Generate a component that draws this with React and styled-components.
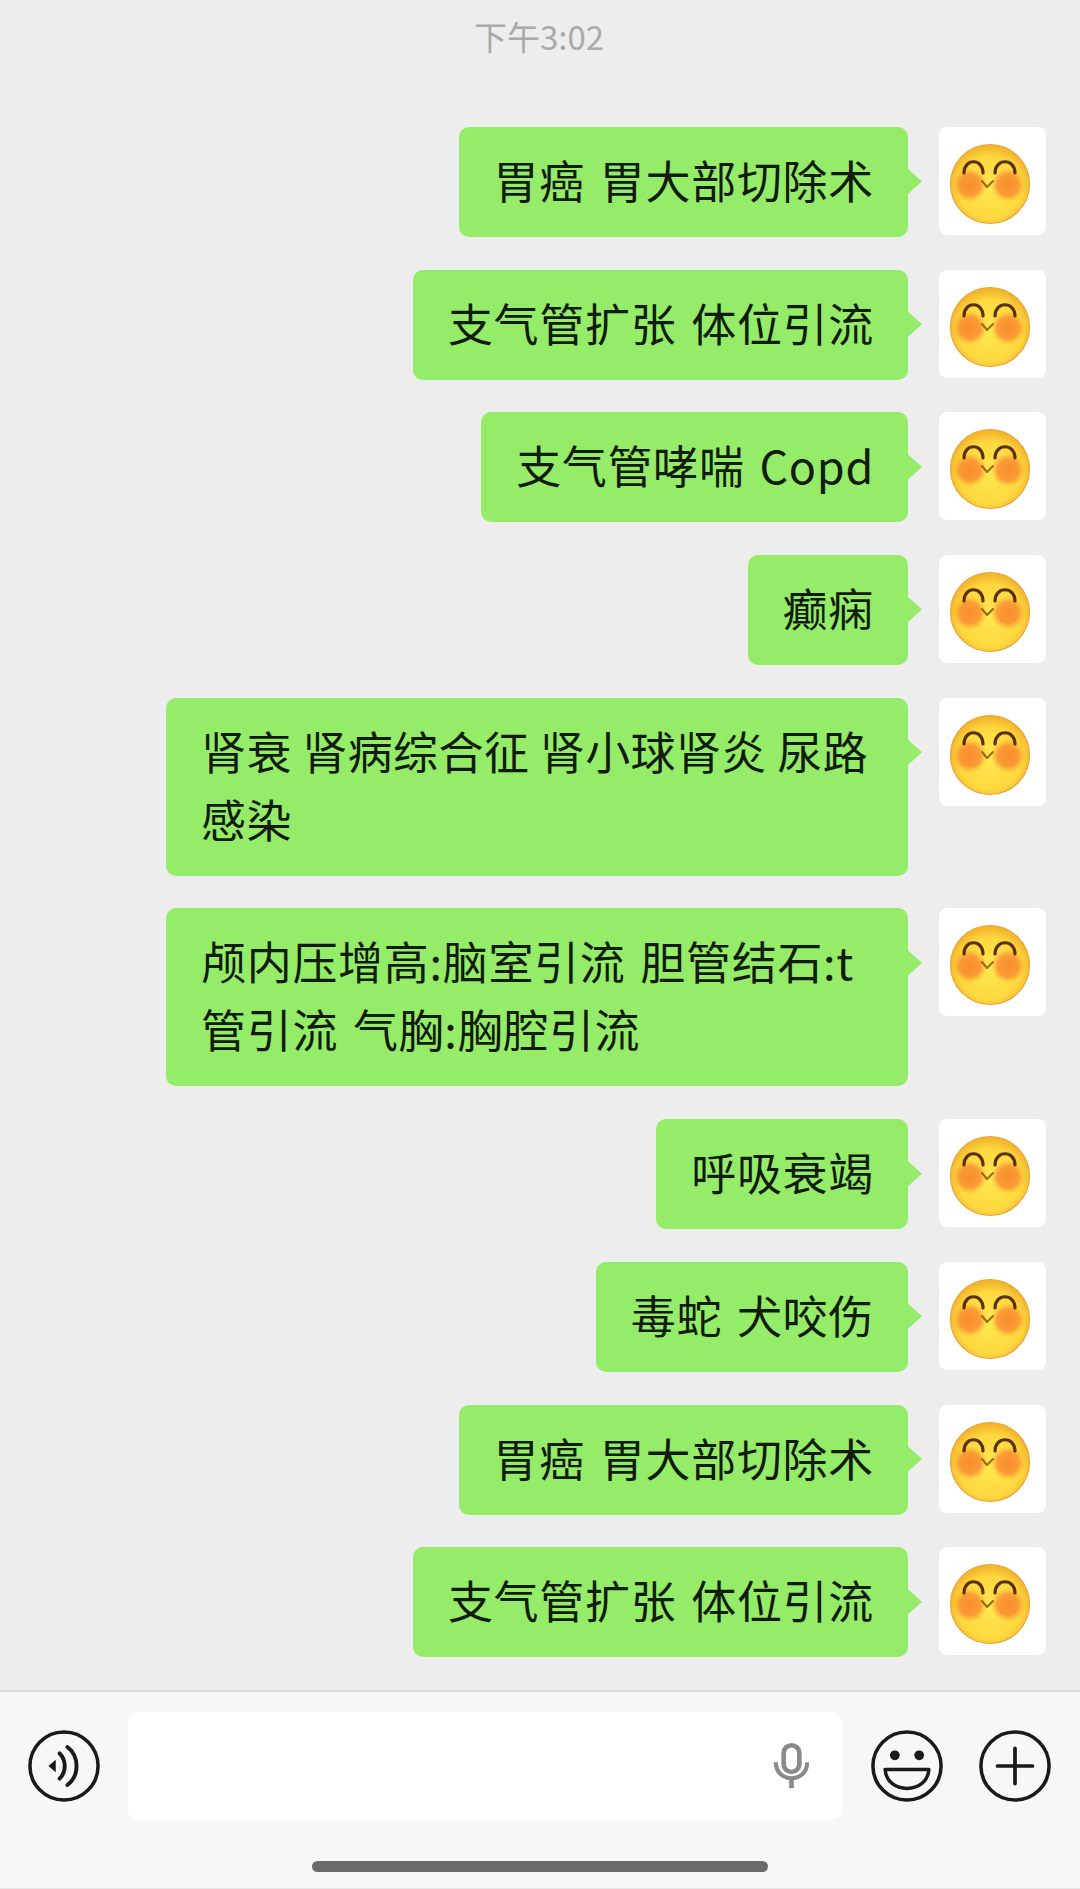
import React from "react";
import styled, { createGlobalStyle } from "styled-components";

const messages = [
  { text: "胃癌 胃大部切除术" },
  { text: "支气管扩张 体位引流" },
  { text: "支气管哮喘 Copd" },
  { text: "癫痫" },
  { text: "肾衰 肾病综合征 肾小球肾炎 尿路感染", tight: true },
  { text: "颅内压增高:脑室引流 胆管结石:t管引流 气胸:胸腔引流" },
  { text: "呼吸衰竭" },
  { text: "毒蛇 犬咬伤" },
  { text: "胃癌 胃大部切除术" },
  { text: "支气管扩张 体位引流" },
];

function BlushFace() {
  return (
    <svg width="88" height="88" viewBox="0 0 88 88">
      <defs>
        <radialGradient id="faceFill" cx="50%" cy="55%" r="58%">
          <stop offset="0%" stopColor="#ffe84f" />
          <stop offset="68%" stopColor="#fdd83e" />
          <stop offset="100%" stopColor="#efa726" />
        </radialGradient>
        <radialGradient id="cheekFill">
          <stop offset="0%" stopColor="#f98a2e" stopOpacity="0.95" />
          <stop offset="62%" stopColor="#fa8f32" stopOpacity="0.85" />
          <stop offset="100%" stopColor="#fba036" stopOpacity="0" />
        </radialGradient>
      </defs>
      <circle cx="44" cy="44" r="39.5" fill="url(#faceFill)" stroke="#e8a43a" strokeWidth="1.2" />
      <circle cx="24" cy="45" r="17" fill="url(#cheekFill)" />
      <circle cx="62" cy="45" r="17" fill="url(#cheekFill)" />
      <path d="M18 33 C18 18 37 18 37 33" fill="none" stroke="#5a3210" strokeWidth="3.2" strokeLinecap="round" />
      <path d="M49 33 C49 18 69 18 69 33" fill="none" stroke="#5a3210" strokeWidth="3.2" strokeLinecap="round" />
      <path d="M36 41 L41 47 L47 41" fill="none" stroke="#9a6a1a" strokeWidth="2" strokeLinecap="round" strokeLinejoin="round" />
    </svg>
  );
}

function VoiceIcon() {
  return (
    <IconSvg viewBox="0 0 76 76">
      <circle cx="38" cy="38" r="35" fill="none" stroke="#1a1a1a" strokeWidth="3.6" />
      <path d="M22 38 L29.5 31.5 L29.5 44.5 Z" fill="#1a1a1a" />
      <path d="M33.5 25 C40.5 32 40.5 44 33.5 51" fill="none" stroke="#1a1a1a" strokeWidth="4" strokeLinecap="round" />
      <path d="M41.5 18.5 C54 28 54 48 41.5 57.5" fill="none" stroke="#1a1a1a" strokeWidth="4" strokeLinecap="round" />
    </IconSvg>
  );
}

function MicIcon() {
  return (
    <MicSvg viewBox="0 0 40 50">
      <rect x="11.5" y="2.5" width="17" height="29" rx="8.5" fill="none" stroke="#8a8a8a" strokeWidth="5" />
      <path d="M3 21 C3 44 37 44 37 21" fill="none" stroke="#8a8a8a" strokeWidth="4.5" />
      <path d="M20 38 L20 49" stroke="#8a8a8a" strokeWidth="5" />
    </MicSvg>
  );
}

function SmileIcon() {
  return (
    <IconSvg viewBox="0 0 76 76">
      <circle cx="38" cy="38" r="35" fill="none" stroke="#1a1a1a" strokeWidth="3.6" />
      <circle cx="25.5" cy="27" r="5" fill="#1a1a1a" />
      <circle cx="50.5" cy="27" r="5" fill="#1a1a1a" />
      <path d="M15.5 41.5 L60.5 41.5 C59 67.5 17 67.5 15.5 41.5 Z" fill="none" stroke="#1a1a1a" strokeWidth="3.6" strokeLinejoin="round" />
    </IconSvg>
  );
}

function PlusIcon() {
  return (
    <IconSvg viewBox="0 0 76 76">
      <circle cx="38" cy="38" r="35" fill="none" stroke="#1a1a1a" strokeWidth="3.6" />
      <path d="M38 20 L38 56 M20 38 L56 38" stroke="#1a1a1a" strokeWidth="3.8" strokeLinecap="round" />
    </IconSvg>
  );
}

export default function App() {
  return (
    <Page>
      <GlobalStyle />
      <Time>下午3:02</Time>
      <Messages>
        {messages.map((message, index) => (
          <Row key={index}>
            <Bubble $tight={message.tight}>{message.text}</Bubble>
            <Avatar>
              <BlushFace />
            </Avatar>
          </Row>
        ))}
      </Messages>
      <InputBar>
        <Controls>
          <VoiceIcon />
          <InputBox>
            <MicIcon />
          </InputBox>
          <RightIcons>
            <SmileIcon />
            <PlusIcon />
          </RightIcons>
        </Controls>
        <HomeBar />
      </InputBar>
    </Page>
  );
}

const GlobalStyle = createGlobalStyle`
  html, body {
    margin: 0;
    padding: 0;
    background: #ededed;
  }
`;

const Page = styled.div`
  width: 1080px;
  height: 1889px;
  display: flex;
  flex-direction: column;
  overflow: hidden;
  background: #ededed;
  font-family: "Noto Sans CJK SC", "Noto Sans", sans-serif;
`;

const Time = styled.div`
  height: 127px;
  padding: 13px 2px 0 0;
  box-sizing: border-box;
  text-align: center;
  font-size: 33px;
  line-height: 46px;
  color: #aaaaaa;
`;

const Messages = styled.div`
  flex: 1;
  display: flex;
  flex-direction: column;
  gap: 32.7px;
  padding-right: 34px;
`;

const Row = styled.div`
  display: flex;
  justify-content: flex-end;
  align-items: flex-start;
  gap: 31px;
`;

const Bubble = styled.div`
  position: relative;
  box-sizing: border-box;
  max-width: 742px;
  padding: 19px 34px 23px 35px;
  border-radius: 10px;
  background: #95ec69;
  color: #111c0c;
  font-size: 45px;
  line-height: 68px;
  letter-spacing: ${(props) => (props.$tight ? "0.4px" : "0.7px")};
  word-spacing: ${(props) => (props.$tight ? "0" : "4px")};

  &::after {
    content: "";
    position: absolute;
    top: 41px;
    right: -14px;
    width: 15px;
    height: 27px;
    background: #95ec69;
    clip-path: polygon(0 0, 100% 50%, 0 100%);
  }
`;

const Avatar = styled.div`
  flex: none;
  width: 107px;
  height: 108px;
  display: flex;
  align-items: center;
  justify-content: center;
  border-radius: 8px;
  background: #ffffff;
  padding: 6px 6px 0 0;
  box-sizing: border-box;
`;

const InputBar = styled.div`
  height: 199px;
  box-sizing: border-box;
  border-top: 2px solid #dcdcdc;
  border-bottom: 1px solid #e6e6e6;
  background: #f7f7f7;
  display: flex;
  flex-direction: column;
  align-items: center;
`;

const Controls = styled.div`
  width: 100%;
  box-sizing: border-box;
  display: flex;
  align-items: center;
  padding: 20px 27px 0 27px;
`;

const IconSvg = styled.svg`
  flex: none;
  width: 74px;
  height: 74px;
`;

const MicSvg = styled.svg`
  width: 37px;
  height: 48px;
`;

const InputBox = styled.div`
  width: 714px;
  height: 108px;
  margin-left: 27px;
  box-sizing: border-box;
  padding-right: 32px;
  display: flex;
  align-items: center;
  justify-content: flex-end;
  border-radius: 10px;
  background: #ffffff;
`;

const RightIcons = styled.div`
  display: flex;
  gap: 34px;
  margin-left: 28px;
`;

const HomeBar = styled.div`
  width: 456px;
  height: 11px;
  margin-top: 41px;
  border-radius: 6px;
  background: #6b6b6b;
`;
